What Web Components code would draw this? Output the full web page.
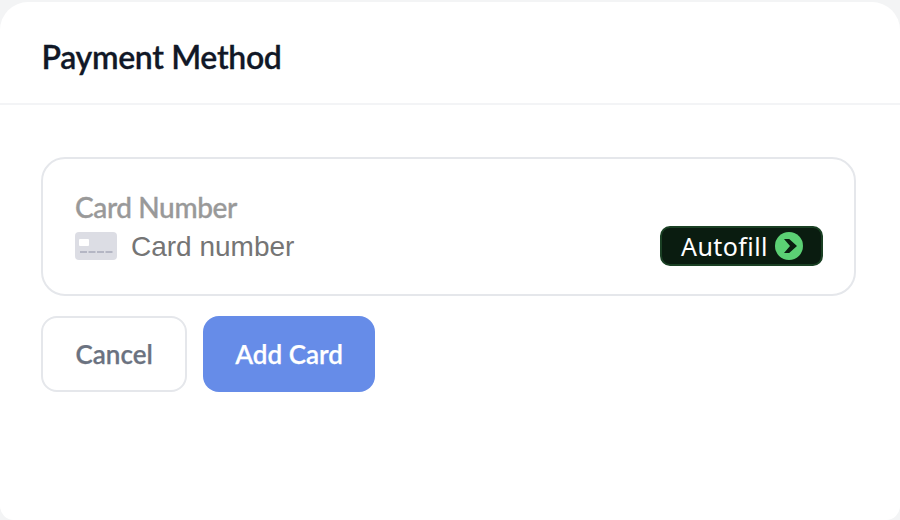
<!doctype html>
<html><head><meta charset="utf-8"><style>
html,body{margin:0;padding:0;background:#f3f4f5}
body{width:900px;height:520px;overflow:hidden;font-family:Lato,sans-serif}
</style></head><body>
<payment-card>
  <span slot="title">Payment Method</span>
  <card-field label="Card Number" placeholder="Card number"></card-field>
  <div slot="actions" style="display:contents">
    <pay-button>Cancel</pay-button>
    <pay-button primary>Add Card</pay-button>
  </div>
</payment-card>
<script>
class PaymentCard extends HTMLElement{constructor(){super();this.attachShadow({mode:'open'}).innerHTML=`<style>
:host{display:flex;flex-direction:column;box-sizing:border-box;width:900px;height:518px;margin-top:2px;background:#fff;border-radius:28px 28px 14px 14px;overflow:hidden}
header{height:103px;box-sizing:border-box;padding:8px 41.5px 0;display:flex;align-items:center;border-bottom:2px solid #f3f4f6;font:600 32px/40px Lato,sans-serif;letter-spacing:-.33px;-webkit-text-stroke:.3px #111827;color:#111827;flex:none}
main{padding:52px 44px 0 41px;display:flex;flex-direction:column;gap:20px}
.actions{display:flex;gap:16px}
</style><header><slot name="title"></slot></header><main><slot></slot><div class="actions"><slot name="actions"></slot></div></main>`}}
customElements.define('payment-card',PaymentCard);
class CardField extends HTMLElement{constructor(){super();this.attachShadow({mode:'open'}).innerHTML=`<style>
:host{display:block;box-sizing:border-box;width:815px;height:139px;border:2px solid #e5e7eb;border-radius:24px;padding:30px 31px 0 32px;font-family:Lato,sans-serif}
label{display:block;font:500 28px/36px Lato,sans-serif;letter-spacing:-.38px;-webkit-text-stroke:.35px #999;color:#999}
.row{display:flex;align-items:center;height:40px}
svg.card{width:42px;height:28px;flex:none;margin-right:14px;margin-top:2px}
.ph{font:28px/40px "Liberation Sans",sans-serif;color:#757575;flex:1;margin-top:4px}
.af{box-sizing:border-box;width:163px;height:40px;margin-top:2px;background:#0a1c10;border:2px solid #1a4024;border-radius:10px;display:flex;align-items:center;padding-left:19px;gap:7px;color:#fff;font:25px/30px "Noto Sans",sans-serif;letter-spacing:.42px}
.af svg{width:28px;height:28px;flex:none}
</style><label></label><div class="row">
<svg class="card" viewBox="0 0 42 28"><rect width="42" height="28" rx="4" fill="#dcdde4"/><rect x="4" y="7" width="10" height="7" rx="1" fill="#fff"/><path d="M5 20h7M13.5 20h7M22 20h7M30.5 20h7" stroke="#b4b6c4" stroke-width="2.2" fill="none"/></svg>
<span class="ph"></span>
<div class="af"><span>Autofill</span><svg viewBox="0 0 28 28"><circle cx="14" cy="14" r="14" fill="#5bd074"/><path d="M9 7h5.2l7.8 7-7.8 7H9l6-7z" fill="#0a1c10"/></svg></div></div>`;
const s=this.shadowRoot;s.querySelector('label').textContent=this.getAttribute('label');s.querySelector('.ph').textContent=this.getAttribute('placeholder')}}
customElements.define('card-field',CardField);
class PayButton extends HTMLElement{constructor(){super();this.attachShadow({mode:'open'}).innerHTML=`<style>
:host{display:inline-flex;align-items:center;justify-content:center;box-sizing:border-box;height:76px;padding:0 32.5px;border-radius:16px;border:2px solid #e5e7eb;background:#fff;color:#6b7280;font:600 26px/36px Lato,sans-serif;-webkit-text-stroke:.25px currentColor}
:host([primary]){background:#668ce8;border:0;color:#fff;padding:0 32px}
</style><slot></slot>`}}
customElements.define('pay-button',PayButton);
</script></body></html>
